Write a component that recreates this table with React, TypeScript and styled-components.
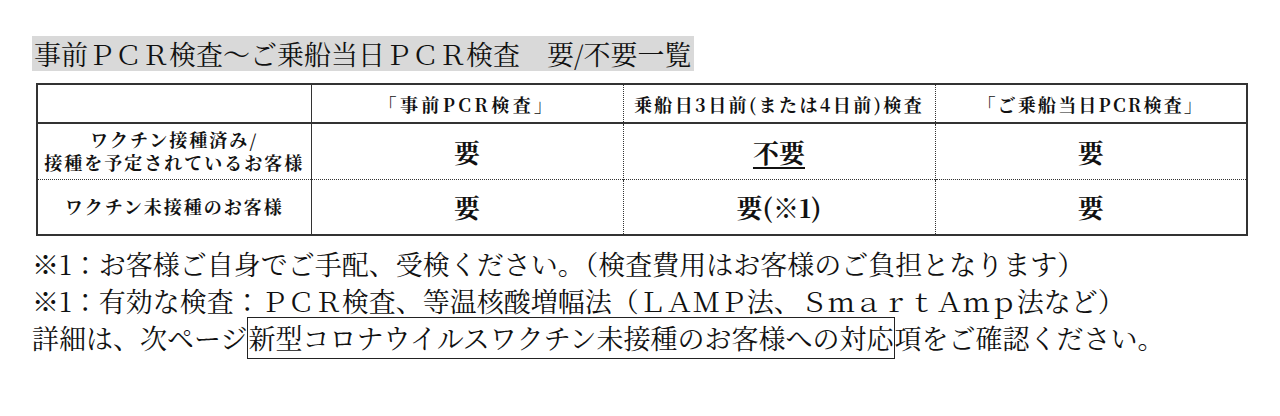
import styled, { createGlobalStyle } from "styled-components";

const GlobalStyle = createGlobalStyle`
  body {
    margin: 0;
    background: #ffffff;
    color: #111111;
    font-family: "Noto Serif CJK JP", "Noto Sans CJK JP", "Liberation Serif", serif;
  }
`

const rows = [
  { label: ["ワクチン接種済み/", "接種を予定されているお客様"], cells: ["要", "不要", "要"], underline: 1 },
  { label: ["ワクチン未接種のお客様"], cells: ["要", "要(※1)", "要"], underline: -1 },
]

const App = () => {
  return (
    <>
      <GlobalStyle />
      <Page>
        <Title>
          <TitleText>事前ＰＣＲ検査～ご乗船当日ＰＣＲ検査　要/不要一覧</TitleText>
        </Title>
        <Table>
          <colgroup>
            <col style={{ width: 274 }} />
            <col style={{ width: 312 }} />
            <col style={{ width: 312 }} />
            <col style={{ width: 312 }} />
          </colgroup>
          <thead>
            <tr>
              <HeadCell $col={0}></HeadCell>
              <HeadCell $col={1} $spacing={3.4}>「事前PCR検査」</HeadCell>
              <HeadCell $col={2} $spacing={2.4}>乗船日3日前(または4日前)検査</HeadCell>
              <HeadCell $col={3} $spacing={2.2}>「ご乗船当日PCR検査」</HeadCell>
            </tr>
          </thead>
          <tbody>
            {rows.map((row, r) => (
              <Row key={r} $last={r === rows.length - 1}>
                <LabelCell>
                  {row.label.map((l, i) => (
                    <LabelLine key={i}>{l}</LabelLine>
                  ))}
                </LabelCell>
                {row.cells.map((c, i) => (
                  <ValueCell key={i} $col={i + 1}>
                    {i === row.underline ? <Under>{c}</Under> : c}
                  </ValueCell>
                ))}
              </Row>
            ))}
          </tbody>
        </Table>
        <Notes>
          <Line>※1：お客様ご自身でご手配、受検ください。（検査費用はお客様のご負担となります）</Line>
          <Line>※1：有効な検査：ＰＣＲ検査、等温核酸増幅法（ＬＡＭＰ法、ＳｍａｒｔＡｍｐ法など）</Line>
          <Line>
            詳細は、次ページ<Boxed>新型コロナウイルスワクチン未接種のお客様への対応</Boxed>項をご確認ください。
          </Line>
        </Notes>
      </Page>
    </>
  );
}

export default App;

const Page = styled.div`
  width: 1280px;
  height: 416px;
  padding: 36px 0 0 32px;
  box-sizing: border-box;
`
const Title = styled.div`
  display: flex;
`
const TitleText = styled.span`
  background: #d9d9d9;
  font-size: 27px;
  line-height: 35px;
  padding: 0 2px;
  white-space: nowrap;
`
const Table = styled.table`
  margin: 12px 0 0 4px;
  border-collapse: collapse;
  table-layout: fixed;
  width: 1210px;
  border: 2px solid #333333;
`
const cellSide = (col: number) =>
  col === 0 ? "none" : col === 1 ? "1.5px solid #333333" : "1px dotted #333333"

const HeadCell = styled.th<{ $col: number; $spacing?: number }>`
  height: 37px;
  padding: 0;
  font-size: 18px;
  font-weight: 700;
  letter-spacing: ${(p) => p.$spacing ?? 0}px;
  text-align: center;
  border-bottom: 2px solid #333333;
  border-left: ${(p) => cellSide(p.$col)};
  white-space: nowrap;
`
const Row = styled.tr<{ $last: boolean }>`
  height: 56px;
  border-bottom: ${(p) => (p.$last ? "none" : "1px dotted #333333")};
`
const LabelCell = styled.td`
  padding: 0;
  font-size: 18px;
  font-weight: 700;
  letter-spacing: 2px;
  text-align: center;
  white-space: nowrap;
`
const LabelLine = styled.div`
  line-height: 23px;
`
const ValueCell = styled.td<{ $col: number }>`
  padding: 0;
  font-size: 26px;
  font-weight: 700;
  text-align: center;
  border-left: ${(p) => cellSide(p.$col)};
`
const Under = styled.span`
  text-decoration: underline;
  text-underline-offset: 4px;
  text-decoration-thickness: 1.5px;
`
const Notes = styled.div`
  margin-top: 9px;
  font-size: 27px;
  line-height: 37px;
  white-space: nowrap;
`
const Line = styled.div``
const Boxed = styled.span`
  border: 1px solid #222222;
  padding: 0 0 1px 0;
`
